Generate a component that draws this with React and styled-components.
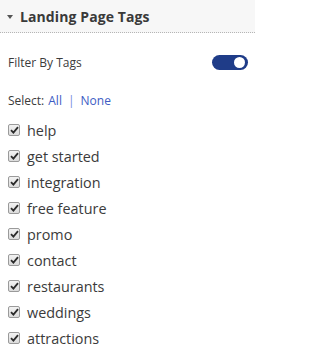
import React, { useState } from "react";
import styled, { createGlobalStyle } from "styled-components";

const Global = createGlobalStyle`
  html, body { margin: 0; padding: 0; background: #fff; }
  body { font-family: "Open Sans", "Liberation Sans", sans-serif; color: #3b3b3b; }
`;

const Panel = styled.div`
  width: 255px;
  height: 359px;
  background: #fff;
  overflow: hidden;
`;

const Header = styled.div`
  height: 33px;
  box-sizing: border-box;
  background: #f7f7f7;
  border-bottom: 1px dotted #b5b5b5;
  display: flex;
  align-items: center;
  padding-left: 7px;
  gap: 7px;
`;

const Caret = styled.span`
  width: 0;
  height: 0;
  border-left: 3px solid transparent;
  border-right: 3px solid transparent;
  border-top: 4px solid #555;
  margin-top: 1px;
`;

const Title = styled.h2`
  margin: 0;
  font-size: 14px;
  font-weight: 700;
  color: #3a3a3a;
  letter-spacing: 0.1px;
`;

const Body = styled.div`
  padding: 20px 7px 0 8px;
  display: flex;
  flex-direction: column;
`;

const FilterRow = styled.div`
  height: 18px;
  display: flex;
  align-items: center;
  justify-content: space-between;
  font-size: 12px;
  color: #3b3b3b;
`;

const Toggle = styled.button`
  width: 36px;
  height: 15px;
  border-radius: 8px;
  border: none;
  padding: 0 3px;
  background: #1f3c88;
  display: flex;
  align-items: center;
  justify-content: ${(p) => (p.$on ? "flex-end" : "flex-start")};
  cursor: pointer;
`;

const Knob = styled.span`
  width: 11px;
  height: 11px;
  border-radius: 50%;
  background: #fff;
`;

const SelectRow = styled.div`
  margin-top: 20px;
  height: 18px;
  display: flex;
  align-items: center;
  font-size: 12px;
  color: #3b3b3b;
  gap: 4px;
`;

const Link = styled.a`
  color: #3d5cc4;
  text-decoration: none;
  cursor: pointer;
`;

const Sep = styled.span`
  color: #6f8de0;
  margin: 0 2px;
`;

const List = styled.ul`
  list-style: none;
  margin: 8px 0 0 0;
  padding: 0;
  display: flex;
  flex-direction: column;
`;

const Item = styled.li`
  height: 26px;
  display: flex;
  align-items: center;
  gap: 7px;
  font-size: 14.4px;
  color: #3b3b3b;
`;

const Box = styled.span`
  width: 12px;
  height: 12px;
  box-sizing: border-box;
  border: 1px solid #9a9a9a;
  border-radius: 2px;
  background: linear-gradient(#f2f2f2, #dcdcdc);
  display: flex;
  align-items: center;
  justify-content: center;
  flex: none;
`;

const tags = [
  "help",
  "get started",
  "integration",
  "free feature",
  "promo",
  "contact",
  "restaurants",
  "weddings",
  "attractions",
];

export default function App() {
  const [on, setOn] = useState(true);
  return (
    <Panel>
      <Global />
      <Header>
        <Caret />
        <Title>Landing Page Tags</Title>
      </Header>
      <Body>
        <FilterRow>
          <span>Filter By Tags</span>
          <Toggle $on={on} onClick={() => setOn(!on)}>
            <Knob />
          </Toggle>
        </FilterRow>
        <SelectRow>
          <span>Select:</span>
          <Link>All</Link>
          <Sep>|</Sep>
          <Link>None</Link>
        </SelectRow>
        <List>
          {tags.map((t) => (
            <Item key={t}>
              <Box>
                <svg width="9" height="8" viewBox="0 0 9 8">
                  <path d="M1 4.2 L3.4 6.6 L8 1.2" fill="none" stroke="#2b2b2b" strokeWidth="1.8" />
                </svg>
              </Box>
              <span>{t}</span>
            </Item>
          ))}
        </List>
      </Body>
    </Panel>
  );
}
